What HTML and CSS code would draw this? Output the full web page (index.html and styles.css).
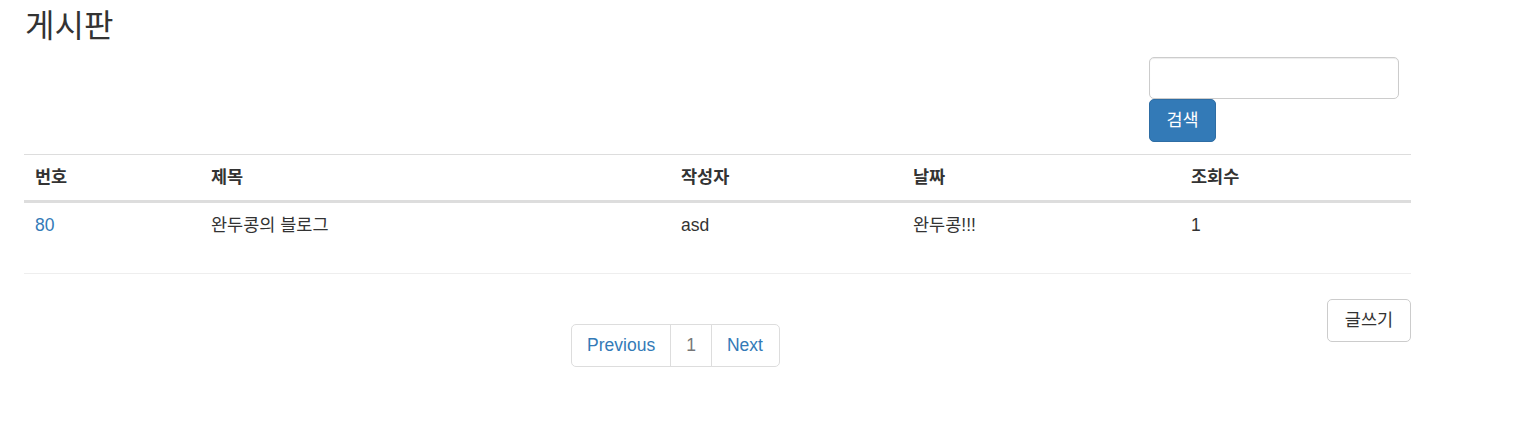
FILE: index.html
```html
<!DOCTYPE html>
<html lang="ko">
<head>
<meta charset="utf-8">
<title>게시판</title>
<link rel="stylesheet" href="styles.css">
</head>
<body>
<div class="page">
  <h3 class="title">게시판</h3>
  <div class="search-row">
    <form class="search">
      <input class="search-input" type="text">
      <button class="btn btn-primary" type="button">검색</button>
    </form>
  </div>
  <table class="board">
    <colgroup>
      <col class="c1"><col class="c2"><col class="c3"><col class="c4"><col class="c5">
    </colgroup>
    <thead>
      <tr><th>번호</th><th>제목</th><th>작성자</th><th>날짜</th><th>조회수</th></tr>
    </thead>
    <tbody>
      <tr class="tall"><td><a href="#">80</a></td><td>완두콩의 블로그</td><td>asd</td><td>완두콩!!!</td><td>1</td></tr>
    </tbody>
  </table>
  <div class="footer-row">
    <div class="pager-wrap">
      <ul class="pagination">
        <li><a href="#">Previous</a></li>
        <li><a href="#" class="current">1</a></li>
        <li><a href="#" class="next">Next</a></li>
      </ul>
    </div>
    <button class="btn btn-default" type="button">글쓰기</button>
  </div>
</div>
</body>
</html>
```

FILE: styles.css
```css
* { box-sizing: border-box; }
html, body { margin: 0; padding: 0; background: #fff; }
body {
  font-family: "Liberation Sans", Arial, "Noto Sans CJK KR", sans-serif;
  font-size: 17.5px;
  line-height: 25px;
  color: #333;
}
.page {
  width: 1387px;
  margin-left: 24px;
}
.title {
  margin: 8px 0 0 1px;
  font-size: 32px;
  font-weight: 400;
  line-height: 36px;
  height: 36px;
  color: #333;
}
.search-row {
  display: flex;
  justify-content: flex-end;
  margin-top: 13px;
}
.search {
  width: 262px;
  margin: 0;
  display: flex;
  flex-direction: column;
  align-items: flex-start;
}
.search-input {
  width: 250px;
  height: 42px;
  border: 1px solid #ccc;
  border-radius: 5px;
  box-shadow: inset 0 1px 1px rgba(0,0,0,.075);
  padding: 7px 15px;
  font: inherit;
  margin: 0;
}
.btn {
  display: inline-block;
  height: 43px;
  padding: 8px 15px;
  font: inherit;
  line-height: 25px;
  border-radius: 5px;
  border: 1px solid transparent;
  cursor: pointer;
  margin: 0;
}
.btn-primary {
  background: #337ab7;
  border-color: #2e6da4;
  color: #fff;
  width: 67px;
  padding: 8px 0;
  text-align: center;
}
.btn-default {
  background: #fff;
  border-color: #ccc;
  color: #333;
  width: 84px;
  padding: 8px 0;
  text-align: center;
}
.board {
  width: 100%;
  border-collapse: collapse;
  margin-top: 12px;
}
.c1 { width: 176px; }
.c2 { width: 470px; }
.c3 { width: 232px; }
.c4 { width: 278px; }
.c5 { width: 231px; }
.board th, .board td {
  padding: 10px 11px;
  text-align: left;
  vertical-align: top;
  line-height: 25px;
}
.board th {
  font-weight: 700;
  border-top: 1px solid #ddd;
  border-bottom: 3px solid #ddd;
  vertical-align: bottom;
}
.board td {
  border-top: 1px solid #ddd;
  border-bottom: 1px solid #eee;
}
.board tr.tall td { height: 72px; padding-top: 10px; }
.board a { color: #337ab7; text-decoration: none; }
.footer-row {
  display: flex;
  align-items: flex-start;
  margin-top: 25px;
}
.pager-wrap {
  flex: 1;
  display: flex;
  justify-content: center;
  margin-top: 25px;
}
.pagination {
  display: flex;
  list-style: none;
  margin: 0;
  padding: 0;
}
.pagination li a {
  display: block;
  padding: 8px 15px;
  line-height: 25px;
  border: 1px solid #ddd;
  margin-left: -1px;
  color: #337ab7;
  text-decoration: none;
  background: #fff;
}
.pagination li a.next { padding-right: 16px; }
.pagination li:first-child a {
  margin-left: 0;
  border-radius: 5px 0 0 5px;
}
.pagination li:last-child a {
  border-radius: 0 5px 5px 0;
}
.pagination a.current { color: #777; }
```
